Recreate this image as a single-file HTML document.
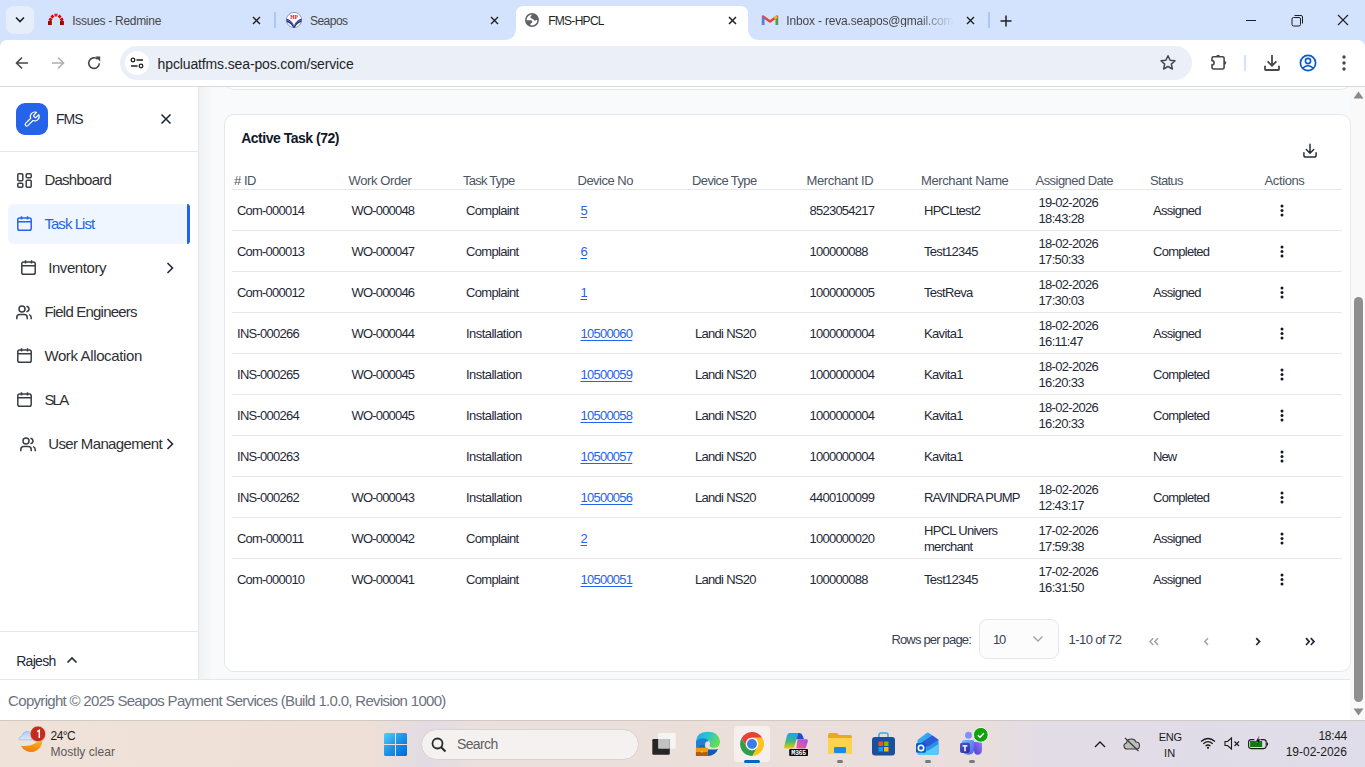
<!DOCTYPE html>
<html><head><meta charset="utf-8"><title>FMS-HPCL</title>
<style>
*{box-sizing:border-box;margin:0;padding:0}
html,body{width:1365px;height:767px;overflow:hidden;font-family:"Liberation Sans",sans-serif;background:#fff;position:relative}
.a{position:absolute}
.t{position:absolute;white-space:nowrap;line-height:1}
svg{overflow:visible}
</style></head><body>
<div class="a" style="left:0px;top:0px;width:1365px;height:50px;background:#d3e3fd"></div>
<div class="a" style="left:6px;top:6px;width:28px;height:28px;background:#e6eefb;border-radius:8px"></div>
<svg class="a" style="left:14px;top:16px;" width="12" height="8" viewBox="0 0 12 8"><path d="M2 1.5 L6 5.5 L10 1.5" fill="none" stroke="#1f1f1f" stroke-width="1.6"/></svg>
<svg class="a" style="left:40px;top:8px;" width="30" height="24" viewBox="0 0 30 24"><rect x="8" y="13" width="3.8" height="4" fill="#a80000"/><rect x="20" y="13" width="3.9" height="4" fill="#a80000"/><rect x="9" y="10" width="3" height="3" fill="#d60000" transform="rotate(30 10.5 11.5)"/><rect x="20.2" y="10" width="3" height="3" fill="#d60000" transform="rotate(-30 21.7 11.5)"/><rect x="11" y="7" width="2.8" height="2.8" fill="#e00000" transform="rotate(45 12.4 8.4)"/><rect x="18.2" y="7" width="2.8" height="2.8" fill="#e00000" transform="rotate(45 19.6 8.4)"/><path d="M14 5.8H17.8L17 8.6H14.8Z" fill="#e8192c"/></svg>
<div class="t" style="left:72.30px;top:14.60px;font-size:12px;color:#474747;letter-spacing:-0.291px;">Issues - Redmine</div>
<svg class="a" style="left:252px;top:16px;" width="9" height="9" viewBox="0 0 9 9"><path d="M1 1L8 8M8 1L1 8" stroke="#1f1f1f" stroke-width="1.4"/></svg>
<div class="a" style="left:274px;top:12px;width:1.5px;height:16px;background:#a8c7fa"></div>
<svg class="a" style="left:286px;top:12px;" width="16" height="16" viewBox="0 0 16 16"><defs><clipPath id="hpc"><circle cx="8" cy="8" r="7.7"/></clipPath></defs><circle cx="8" cy="8" r="7.6" fill="#fff" stroke="#5060a8" stroke-width="0.6"/><g clip-path="url(#hpc)"><path d="M-0.5 6.6Q5 6.8 8 13.2Q11 6.8 16.5 6.6V10Q11.5 10.3 8.6 16H7.4Q4.5 10.3 -0.5 10Z" fill="#1c2a80"/><path d="M0 8.3Q5.2 8.6 8 14.2Q10.8 8.6 16 8.3" fill="none" stroke="#fff" stroke-width="0.5" opacity="0.7"/></g><text x="8" y="6.8" font-size="5.6" font-weight="700" text-anchor="middle" fill="#d8141e" font-family="Liberation Serif" letter-spacing="-0.2">HP</text></svg>
<div class="t" style="left:310.00px;top:14.60px;font-size:12px;color:#474747;letter-spacing:-0.533px;">Seapos</div>
<svg class="a" style="left:490px;top:16px;" width="9" height="9" viewBox="0 0 9 9"><path d="M1 1L8 8M8 1L1 8" stroke="#1f1f1f" stroke-width="1.4"/></svg>
<svg class="a" style="left:504px;top:6px;" width="256" height="34" viewBox="0 0 256 34"><path d="M0 34 Q12 34 12 22 L12 8 Q12 0 20 0 L236 0 Q244 0 244 8 L244 22 Q244 34 256 34 Z" fill="#fff"/></svg>
<svg class="a" style="left:524px;top:12px;" width="16" height="16" viewBox="0 0 16 16"><defs><clipPath id="glc"><circle cx="8" cy="8" r="6.3"/></clipPath></defs><circle cx="8" cy="8" r="6.2" fill="none" stroke="#5f6368" stroke-width="1.5"/><g clip-path="url(#glc)" fill="#5f6368"><path d="M6.5 4.6Q7.5 2.6 9.8 1.8L15 4V8.3L12.2 8Q11.2 9.2 10 8.2Q9.2 6.6 7.4 6.6Q6.2 6.2 6.5 4.6Z"/><path d="M1 8.2H6.8Q8.3 8.4 8.4 10Q8.3 11 7 11.3Q6 12 6.2 15H1Z"/></g></svg>
<div class="t" style="left:548.20px;top:14.60px;font-size:12px;color:#1f1f1f;letter-spacing:-0.717px;">FMS-HPCL</div>
<svg class="a" style="left:728px;top:16px;" width="9" height="9" viewBox="0 0 9 9"><path d="M1 1L8 8M8 1L1 8" stroke="#1f1f1f" stroke-width="1.5"/></svg>
<svg class="a" style="left:762px;top:14px;" width="16" height="12" viewBox="0 0 16 12"><path d="M1 11V2.5L8 7.5L15 2.5V11" fill="none" stroke="#ea4335" stroke-width="2.4" stroke-linejoin="round"/><path d="M1.2 11V3" stroke="#4285f4" stroke-width="2.4"/><path d="M14.8 11V3" stroke="#34a853" stroke-width="2.4"/><path d="M12.5 4.3L15 2.5" stroke="#fbbc04" stroke-width="2.4"/></svg>
<div class="t" style="left:786.3px;top:14.6px;font-size:12px;color:#474747;letter-spacing:-0.18px;width:168px;overflow:hidden;-webkit-mask-image:linear-gradient(90deg,#000 78%,transparent)">Inbox - reva.seapos@gmail.com</div>
<svg class="a" style="left:966px;top:16px;" width="9" height="9" viewBox="0 0 9 9"><path d="M1 1L8 8M8 1L1 8" stroke="#1f1f1f" stroke-width="1.4"/></svg>
<div class="a" style="left:988px;top:12px;width:1.5px;height:16px;background:#a8c7fa"></div>
<svg class="a" style="left:1000px;top:15px;" width="12" height="12" viewBox="0 0 12 12"><path d="M6 0.5V11.5M0.5 6H11.5" stroke="#1f1f1f" stroke-width="1.5"/></svg>
<div class="a" style="left:1246px;top:20px;width:10px;height:1px;background:#1f1f1f"></div>
<svg class="a" style="left:1291px;top:14px;" width="13" height="13" viewBox="0 0 13 13"><rect x="1" y="3.5" width="8.5" height="8.5" rx="1.5" fill="none" stroke="#1f1f1f" stroke-width="1"/><path d="M3.5 1.5H10Q11.5 1.5 11.5 3V9.5" fill="none" stroke="#1f1f1f" stroke-width="1"/></svg>
<svg class="a" style="left:1337px;top:14px;" width="12" height="12" viewBox="0 0 12 12"><path d="M1 1L11 11M11 1L1 11" stroke="#1f1f1f" stroke-width="1.1"/></svg>
<div class="a" style="left:0;top:40px;width:1365px;height:47px;background:#fff;border-radius:7px 7px 0 0"></div>
<div class="a" style="left:0px;top:86px;width:1365px;height:1px;background:#d9d9d9"></div>
<svg class="a" style="left:15px;top:56px;" width="14" height="14" viewBox="0 0 14 14"><path d="M13 7H2M7 1.5L1.5 7L7 12.5" fill="none" stroke="#474747" stroke-width="1.6"/></svg>
<svg class="a" style="left:51px;top:56px;" width="14" height="14" viewBox="0 0 14 14"><path d="M1 7H12M7 1.5L12.5 7L7 12.5" fill="none" stroke="#b0b0b0" stroke-width="1.6"/></svg>
<svg class="a" style="left:87px;top:56px;" width="14" height="14" viewBox="0 0 14 14"><path d="M12.3 7.2A5.3 5.3 0 1 1 10.6 3.2" fill="none" stroke="#474747" stroke-width="1.6"/><path d="M8.3 0.6H13.2V5.5Z" fill="#474747"/></svg>
<div class="a" style="left:120px;top:46px;width:1072px;height:34px;background:#eaeff8;border-radius:17px"></div>
<div class="a" style="left:125px;top:51px;width:24px;height:24px;background:#fff;border-radius:12px"></div>
<svg class="a" style="left:130px;top:57px;" width="14" height="12" viewBox="0 0 14 12"><circle cx="3" cy="3" r="1.8" fill="none" stroke="#1f1f1f" stroke-width="1.3"/><path d="M6.5 3H13M1 9H7.5" stroke="#1f1f1f" stroke-width="1.3"/><circle cx="11" cy="9" r="1.8" fill="none" stroke="#1f1f1f" stroke-width="1.3"/></svg>
<div class="t" style="left:157.60px;top:56.50px;font-size:14px;color:#1f1f1f;letter-spacing:-0.132px;">hpcluatfms.sea-pos.com/service</div>
<svg class="a" style="left:1159px;top:54px;" width="18" height="18" viewBox="0 0 18 18"><path d="M9 1.8L11.1 6.3L16 6.8L12.3 10.1L13.4 15L9 12.5L4.6 15L5.7 10.1L2 6.8L6.9 6.3Z" fill="none" stroke="#474747" stroke-width="1.5" stroke-linejoin="round"/></svg>
<svg class="a" style="left:1210px;top:54px;" width="18" height="17" viewBox="0 0 18 17"><path d="M3.5 2.7H12.6Q14.1 2.7 14.1 4.2V13.5Q14.1 15 12.6 15H3.5Q2 15 2 13.5V10.8A2 2 0 0 0 2 6.6V4.2Q2 2.7 3.5 2.7Z" fill="none" stroke="#474747" stroke-width="1.6" stroke-linejoin="round"/><path d="M6.2 2.6A1.9 1.9 0 0 1 10 2.6Z" fill="#474747"/><path d="M14.3 6.9A1.9 1.9 0 0 1 14.3 10.7Z" fill="#474747"/></svg>
<div class="a" style="left:1244px;top:55px;width:2px;height:16px;background:#d3e3fd"></div>
<svg class="a" style="left:1263px;top:54px;" width="18" height="18" viewBox="0 0 18 18"><path d="M9 1V11.8M4.6 7.3L9 11.7L13.4 7.3" fill="none" stroke="#474747" stroke-width="1.8"/><path d="M2 11.8V15.2Q2 16 2.8 16H15.2Q16 16 16 15.2V11.8" fill="none" stroke="#474747" stroke-width="1.8"/></svg>
<svg class="a" style="left:1299px;top:54px;" width="18" height="18" viewBox="0 0 18 18"><circle cx="9" cy="9" r="7.6" fill="none" stroke="#0b57d0" stroke-width="1.7"/><circle cx="9" cy="7" r="2.6" fill="none" stroke="#0b57d0" stroke-width="1.6"/><path d="M4 14Q9 9.5 14 14" fill="none" stroke="#0b57d0" stroke-width="1.6"/></svg>
<svg class="a" style="left:1340px;top:55px;" width="8" height="16" viewBox="0 0 8 16"><circle cx="4" cy="2" r="1.7" fill="#474747"/><circle cx="4" cy="8" r="1.7" fill="#474747"/><circle cx="4" cy="14" r="1.7" fill="#474747"/></svg>
<div class="a" style="left:0px;top:87px;width:1350px;height:593px;background:#f9fafb"></div>
<div class="a" style="left:1350px;top:87px;width:15px;height:633px;background:#f9f9f9"></div>
<svg class="a" style="left:1353px;top:91px;" width="11" height="8" viewBox="0 0 11 8"><path d="M0.5 7.5L5.5 0.5L10.5 7.5Z" fill="#8a8a8a"/></svg>
<svg class="a" style="left:1353px;top:708px;" width="11" height="8" viewBox="0 0 11 8"><path d="M0.5 0.5L5.5 7.5L10.5 0.5Z" fill="#8a8a8a"/></svg>
<div class="a" style="left:1354px;top:297px;width:9px;height:405px;background:#8f8f8f;border-radius:5px"></div>
<div class="a" style="left:0;top:87px;width:1350px;height:20px;overflow:hidden"><div class="a" style="left:224px;top:-27px;width:1127px;height:30px;background:#fff;border:1px solid #e5e7eb;border-top:none;border-radius:0 0 10px 10px"></div></div>
<div class="a" style="left:0px;top:86px;width:1350px;height:1px;background:#d9d9d9"></div>
<div class="a" style="left:0;top:87px;width:199px;height:593px;background:#fff;border-right:1px solid #e5e7eb"></div>
<div class="a" style="left:199px;top:87px;width:14px;height:593px;background:linear-gradient(90deg,rgba(0,0,0,0.035),rgba(0,0,0,0))"></div>
<div class="a" style="left:0px;top:151px;width:198px;height:1px;background:#e5e7eb"></div>
<div class="a" style="left:0px;top:631px;width:198px;height:1px;background:#e5e7eb"></div>
<div class="a" style="left:16px;top:103px;width:32px;height:32px;background:#2563eb;border-radius:9px"></div>
<svg class="a" style="left:24px;top:111px;" width="16" height="16" viewBox="0 0 16 16"><path d="M10.2 4.2a0.8 0.8 0 0 0 0 1.1l1.3 1.3a0.8 0.8 0 0 0 1.1 0l3-3a4.8 4.8 0 0 1-6.3 6.3l-5.5 5.5a1.7 1.7 0 0 1-2.4-2.4l5.5-5.5a4.8 4.8 0 0 1 6.3-6.3z" fill="none" stroke="#fff" stroke-width="1.3" stroke-linejoin="round" transform="translate(0.3,0.3) scale(0.93)"/></svg>
<div class="t" style="left:56.00px;top:112.40px;font-size:14px;color:#1f2937;letter-spacing:-1.017px;">FMS</div>
<svg class="a" style="left:160px;top:113px;" width="12" height="12" viewBox="0 0 12 12"><path d="M1.5 1.5L10.5 10.5M10.5 1.5L1.5 10.5" stroke="#1f2937" stroke-width="1.6"/></svg>
<svg class="a" style="left:17px;top:173px;" width="15" height="15" viewBox="0 0 15 15"><rect x="0.8" y="0.8" width="5" height="7" rx="1" fill="none" stroke="#3a3d44" stroke-width="1.5"/><rect x="9.2" y="0.8" width="5" height="4" rx="1" fill="none" stroke="#3a3d44" stroke-width="1.5"/><rect x="9.2" y="7.2" width="5" height="7" rx="1" fill="none" stroke="#3a3d44" stroke-width="1.5"/><rect x="0.8" y="10.2" width="5" height="4" rx="1" fill="none" stroke="#3a3d44" stroke-width="1.5"/></svg>
<div class="t" style="left:44.40px;top:171.75px;font-size:15px;color:#2e3034;letter-spacing:-0.731px;">Dashboard</div>
<div class="a" style="left:8px;top:204px;width:182px;height:40px;background:#eff6ff;border-radius:6px"></div>
<div class="a" style="left:187px;top:204px;width:3px;height:40px;background:#2563eb;border-radius:0 6px 6px 0"></div>
<svg class="a" style="left:17px;top:216px;" width="15" height="15" viewBox="0 0 15 15"><rect x="0.8" y="2" width="13.4" height="12.2" rx="1.8" fill="none" stroke="#2563eb" stroke-width="1.5"/><path d="M0.8 5.8H14.2M4.5 0.3V3.5M10.5 0.3V3.5" stroke="#2563eb" stroke-width="1.5"/></svg>
<div class="t" style="left:44.40px;top:216.05px;font-size:15px;color:#2563eb;letter-spacing:-0.939px;">Task List</div>
<svg class="a" style="left:21px;top:260px;" width="15" height="15" viewBox="0 0 15 15"><rect x="0.8" y="2" width="13.4" height="12.2" rx="1.8" fill="none" stroke="#3a3d44" stroke-width="1.5"/><path d="M0.8 5.8H14.2M4.5 0.3V3.5M10.5 0.3V3.5" stroke="#3a3d44" stroke-width="1.5"/></svg>
<div class="t" style="left:48.20px;top:259.95px;font-size:15px;color:#2e3034;letter-spacing:-0.422px;">Inventory</div>
<svg class="a" style="left:166px;top:262px;" width="8" height="12" viewBox="0 0 8 12"><path d="M1.5 1L6.5 6L1.5 11" fill="none" stroke="#1f2937" stroke-width="1.6"/></svg>
<svg class="a" style="left:16px;top:305px;" width="16" height="15" viewBox="0 0 16 15"><circle cx="6" cy="4" r="3" fill="none" stroke="#3a3d44" stroke-width="1.5"/><path d="M0.8 14.2V12.5Q0.8 9.5 3.8 9.5H8.2Q11.2 9.5 11.2 12.5V14.2" fill="none" stroke="#3a3d44" stroke-width="1.5"/><path d="M10.5 1.2Q13 2 13 4Q13 6 10.5 6.8M13 9.6Q15.2 10.3 15.2 12.5V14.2" fill="none" stroke="#3a3d44" stroke-width="1.5"/></svg>
<div class="t" style="left:44.40px;top:303.95px;font-size:15px;color:#2e3034;letter-spacing:-0.794px;">Field Engineers</div>
<svg class="a" style="left:17px;top:348px;" width="15" height="15" viewBox="0 0 15 15"><rect x="0.8" y="2" width="13.4" height="12.2" rx="1.8" fill="none" stroke="#3a3d44" stroke-width="1.5"/><path d="M0.8 5.8H14.2M4.5 0.3V3.5M10.5 0.3V3.5" stroke="#3a3d44" stroke-width="1.5"/></svg>
<div class="t" style="left:44.40px;top:347.95px;font-size:15px;color:#2e3034;letter-spacing:-0.373px;">Work Allocation</div>
<svg class="a" style="left:17px;top:392px;" width="15" height="15" viewBox="0 0 15 15"><rect x="0.8" y="2" width="13.4" height="12.2" rx="1.8" fill="none" stroke="#3a3d44" stroke-width="1.5"/><path d="M0.8 5.8H14.2M4.5 0.3V3.5M10.5 0.3V3.5" stroke="#3a3d44" stroke-width="1.5"/></svg>
<div class="t" style="left:44.40px;top:391.95px;font-size:15px;color:#2e3034;letter-spacing:-1.784px;">SLA</div>
<svg class="a" style="left:20px;top:437px;" width="16" height="15" viewBox="0 0 16 15"><circle cx="6" cy="4" r="3" fill="none" stroke="#3a3d44" stroke-width="1.5"/><path d="M0.8 14.2V12.5Q0.8 9.5 3.8 9.5H8.2Q11.2 9.5 11.2 12.5V14.2" fill="none" stroke="#3a3d44" stroke-width="1.5"/><path d="M10.5 1.2Q13 2 13 4Q13 6 10.5 6.8M13 9.6Q15.2 10.3 15.2 12.5V14.2" fill="none" stroke="#3a3d44" stroke-width="1.5"/></svg>
<div class="t" style="left:48.20px;top:435.95px;font-size:15px;color:#2e3034;letter-spacing:-0.639px;">User Management</div>
<svg class="a" style="left:166px;top:438px;" width="8" height="12" viewBox="0 0 8 12"><path d="M1.5 1L6.5 6L1.5 11" fill="none" stroke="#1f2937" stroke-width="1.6"/></svg>
<div class="t" style="left:16.20px;top:653.60px;font-size:14px;color:#1f2937;letter-spacing:-0.696px;">Rajesh</div>
<svg class="a" style="left:66px;top:655px;" width="12" height="9" viewBox="0 0 12 9"><path d="M1.5 7.5L6 3L10.5 7.5" fill="none" stroke="#1f2937" stroke-width="1.6"/></svg>
<div class="a" style="left:224px;top:114px;width:1127px;height:558px;background:#fff;border:1px solid #e5e7eb;border-radius:10px"></div>
<div class="t" style="left:241.20px;top:131.10px;font-size:14px;color:#111827;font-weight:700;letter-spacing:-0.491px;">Active Task (72)</div>
<svg class="a" style="left:1302px;top:143px;" width="16" height="16" viewBox="0 0 16 16"><path d="M8 1.3V10.2M4.3 6.5L8 10.2L11.7 6.5M1.9 9.8V12.2Q1.9 14.1 3.8 14.1H12.2Q14.1 14.1 14.1 12.2V9.8" fill="none" stroke="#2b303a" stroke-width="1.5" stroke-linecap="round" stroke-linejoin="round"/></svg>
<div class="t" style="left:234.00px;top:173.95px;font-size:13px;color:#4b5563;letter-spacing:-0.477px;font-weight:400;"># ID</div>
<div class="t" style="left:348.50px;top:173.95px;font-size:13px;color:#4b5563;letter-spacing:-0.393px;font-weight:400;">Work Order</div>
<div class="t" style="left:463.00px;top:173.95px;font-size:13px;color:#4b5563;letter-spacing:-0.754px;font-weight:400;">Task Type</div>
<div class="t" style="left:577.50px;top:173.95px;font-size:13px;color:#4b5563;letter-spacing:-0.507px;font-weight:400;">Device No</div>
<div class="t" style="left:692.00px;top:173.95px;font-size:13px;color:#4b5563;letter-spacing:-0.608px;font-weight:400;">Device Type</div>
<div class="t" style="left:806.50px;top:173.95px;font-size:13px;color:#4b5563;letter-spacing:-0.372px;font-weight:400;">Merchant ID</div>
<div class="t" style="left:921.00px;top:173.95px;font-size:13px;color:#4b5563;letter-spacing:-0.390px;font-weight:400;">Merchant Name</div>
<div class="t" style="left:1035.50px;top:173.95px;font-size:13px;color:#4b5563;letter-spacing:-0.542px;font-weight:400;">Assigned Date</div>
<div class="t" style="left:1150.00px;top:173.95px;font-size:13px;color:#4b5563;letter-spacing:-0.692px;font-weight:400;">Status</div>
<div class="t" style="left:1264.50px;top:173.95px;font-size:13px;color:#4b5563;letter-spacing:-0.376px;font-weight:400;">Actions</div>
<div class="a" style="left:232px;top:189px;width:1110px;height:1px;background:#e5e7eb"></div>
<div class="t" style="left:237.00px;top:203.95px;font-size:13px;color:#1f2937;letter-spacing:-0.789px;">Com-000014</div>
<div class="t" style="left:351.50px;top:203.95px;font-size:13px;color:#1f2937;letter-spacing:-0.818px;">WO-000048</div>
<div class="t" style="left:466.00px;top:203.95px;font-size:13px;color:#1f2937;letter-spacing:-0.683px;">Complaint</div>
<div class="t" style="left:580.50px;top:203.95px;font-size:13px;color:#2563eb;letter-spacing:-0.759px;text-decoration:underline;text-underline-offset:2px;">5</div>
<div class="t" style="left:809.50px;top:203.95px;font-size:13px;color:#1f2937;letter-spacing:-0.759px;">8523054217</div>
<div class="t" style="left:924.00px;top:203.95px;font-size:13px;color:#1f2937;letter-spacing:-0.733px;">HPCLtest2</div>
<div class="t" style="left:1038.50px;top:196.15px;font-size:13px;color:#1f2937;letter-spacing:-0.698px;">19-02-2026</div>
<div class="t" style="left:1038.50px;top:211.95px;font-size:13px;color:#1f2937;letter-spacing:-0.664px;">18:43:28</div>
<div class="t" style="left:1153.00px;top:203.95px;font-size:13px;color:#1f2937;letter-spacing:-0.702px;">Assigned</div>
<svg class="a" style="left:1279px;top:203.5px;" width="6" height="14" viewBox="0 0 6 14"><circle cx="3" cy="1.9" r="1.5" fill="#111827"/><circle cx="3" cy="6.5" r="1.5" fill="#111827"/><circle cx="3" cy="11.1" r="1.5" fill="#111827"/></svg>
<div class="a" style="left:232px;top:230px;width:1110px;height:1px;background:#e5e7eb"></div>
<div class="t" style="left:237.00px;top:244.95px;font-size:13px;color:#1f2937;letter-spacing:-0.789px;">Com-000013</div>
<div class="t" style="left:351.50px;top:244.95px;font-size:13px;color:#1f2937;letter-spacing:-0.818px;">WO-000047</div>
<div class="t" style="left:466.00px;top:244.95px;font-size:13px;color:#1f2937;letter-spacing:-0.683px;">Complaint</div>
<div class="t" style="left:580.50px;top:244.95px;font-size:13px;color:#2563eb;letter-spacing:-0.759px;text-decoration:underline;text-underline-offset:2px;">6</div>
<div class="t" style="left:809.50px;top:244.95px;font-size:13px;color:#1f2937;letter-spacing:-0.759px;">100000088</div>
<div class="t" style="left:924.00px;top:244.95px;font-size:13px;color:#1f2937;letter-spacing:-0.700px;">Test12345</div>
<div class="t" style="left:1038.50px;top:237.15px;font-size:13px;color:#1f2937;letter-spacing:-0.698px;">18-02-2026</div>
<div class="t" style="left:1038.50px;top:252.95px;font-size:13px;color:#1f2937;letter-spacing:-0.664px;">17:50:33</div>
<div class="t" style="left:1153.00px;top:244.95px;font-size:13px;color:#1f2937;letter-spacing:-0.733px;">Completed</div>
<svg class="a" style="left:1279px;top:244.5px;" width="6" height="14" viewBox="0 0 6 14"><circle cx="3" cy="1.9" r="1.5" fill="#111827"/><circle cx="3" cy="6.5" r="1.5" fill="#111827"/><circle cx="3" cy="11.1" r="1.5" fill="#111827"/></svg>
<div class="a" style="left:232px;top:271px;width:1110px;height:1px;background:#e5e7eb"></div>
<div class="t" style="left:237.00px;top:285.95px;font-size:13px;color:#1f2937;letter-spacing:-0.789px;">Com-000012</div>
<div class="t" style="left:351.50px;top:285.95px;font-size:13px;color:#1f2937;letter-spacing:-0.818px;">WO-000046</div>
<div class="t" style="left:466.00px;top:285.95px;font-size:13px;color:#1f2937;letter-spacing:-0.683px;">Complaint</div>
<div class="t" style="left:580.50px;top:285.95px;font-size:13px;color:#2563eb;letter-spacing:-0.759px;text-decoration:underline;text-underline-offset:2px;">1</div>
<div class="t" style="left:809.50px;top:285.95px;font-size:13px;color:#1f2937;letter-spacing:-0.759px;">1000000005</div>
<div class="t" style="left:924.00px;top:285.95px;font-size:13px;color:#1f2937;letter-spacing:-0.711px;">TestReva</div>
<div class="t" style="left:1038.50px;top:278.15px;font-size:13px;color:#1f2937;letter-spacing:-0.698px;">18-02-2026</div>
<div class="t" style="left:1038.50px;top:293.95px;font-size:13px;color:#1f2937;letter-spacing:-0.664px;">17:30:03</div>
<div class="t" style="left:1153.00px;top:285.95px;font-size:13px;color:#1f2937;letter-spacing:-0.702px;">Assigned</div>
<svg class="a" style="left:1279px;top:285.5px;" width="6" height="14" viewBox="0 0 6 14"><circle cx="3" cy="1.9" r="1.5" fill="#111827"/><circle cx="3" cy="6.5" r="1.5" fill="#111827"/><circle cx="3" cy="11.1" r="1.5" fill="#111827"/></svg>
<div class="a" style="left:232px;top:312px;width:1110px;height:1px;background:#e5e7eb"></div>
<div class="t" style="left:237.00px;top:326.95px;font-size:13px;color:#1f2937;letter-spacing:-0.728px;">INS-000266</div>
<div class="t" style="left:351.50px;top:326.95px;font-size:13px;color:#1f2937;letter-spacing:-0.818px;">WO-000044</div>
<div class="t" style="left:466.00px;top:326.95px;font-size:13px;color:#1f2937;letter-spacing:-0.544px;">Installation</div>
<div class="t" style="left:580.50px;top:326.95px;font-size:13px;color:#2563eb;letter-spacing:-0.759px;text-decoration:underline;text-underline-offset:2px;">10500060</div>
<div class="t" style="left:695.00px;top:326.95px;font-size:13px;color:#1f2937;letter-spacing:-0.713px;">Landi NS20</div>
<div class="t" style="left:809.50px;top:326.95px;font-size:13px;color:#1f2937;letter-spacing:-0.759px;">1000000004</div>
<div class="t" style="left:924.00px;top:326.95px;font-size:13px;color:#1f2937;letter-spacing:-0.650px;">Kavita1</div>
<div class="t" style="left:1038.50px;top:319.15px;font-size:13px;color:#1f2937;letter-spacing:-0.698px;">18-02-2026</div>
<div class="t" style="left:1038.50px;top:334.95px;font-size:13px;color:#1f2937;letter-spacing:-0.651px;">16:11:47</div>
<div class="t" style="left:1153.00px;top:326.95px;font-size:13px;color:#1f2937;letter-spacing:-0.702px;">Assigned</div>
<svg class="a" style="left:1279px;top:326.5px;" width="6" height="14" viewBox="0 0 6 14"><circle cx="3" cy="1.9" r="1.5" fill="#111827"/><circle cx="3" cy="6.5" r="1.5" fill="#111827"/><circle cx="3" cy="11.1" r="1.5" fill="#111827"/></svg>
<div class="a" style="left:232px;top:353px;width:1110px;height:1px;background:#e5e7eb"></div>
<div class="t" style="left:237.00px;top:367.95px;font-size:13px;color:#1f2937;letter-spacing:-0.728px;">INS-000265</div>
<div class="t" style="left:351.50px;top:367.95px;font-size:13px;color:#1f2937;letter-spacing:-0.818px;">WO-000045</div>
<div class="t" style="left:466.00px;top:367.95px;font-size:13px;color:#1f2937;letter-spacing:-0.544px;">Installation</div>
<div class="t" style="left:580.50px;top:367.95px;font-size:13px;color:#2563eb;letter-spacing:-0.759px;text-decoration:underline;text-underline-offset:2px;">10500059</div>
<div class="t" style="left:695.00px;top:367.95px;font-size:13px;color:#1f2937;letter-spacing:-0.713px;">Landi NS20</div>
<div class="t" style="left:809.50px;top:367.95px;font-size:13px;color:#1f2937;letter-spacing:-0.759px;">1000000004</div>
<div class="t" style="left:924.00px;top:367.95px;font-size:13px;color:#1f2937;letter-spacing:-0.650px;">Kavita1</div>
<div class="t" style="left:1038.50px;top:360.15px;font-size:13px;color:#1f2937;letter-spacing:-0.698px;">18-02-2026</div>
<div class="t" style="left:1038.50px;top:375.95px;font-size:13px;color:#1f2937;letter-spacing:-0.664px;">16:20:33</div>
<div class="t" style="left:1153.00px;top:367.95px;font-size:13px;color:#1f2937;letter-spacing:-0.733px;">Completed</div>
<svg class="a" style="left:1279px;top:367.5px;" width="6" height="14" viewBox="0 0 6 14"><circle cx="3" cy="1.9" r="1.5" fill="#111827"/><circle cx="3" cy="6.5" r="1.5" fill="#111827"/><circle cx="3" cy="11.1" r="1.5" fill="#111827"/></svg>
<div class="a" style="left:232px;top:394px;width:1110px;height:1px;background:#e5e7eb"></div>
<div class="t" style="left:237.00px;top:408.95px;font-size:13px;color:#1f2937;letter-spacing:-0.728px;">INS-000264</div>
<div class="t" style="left:351.50px;top:408.95px;font-size:13px;color:#1f2937;letter-spacing:-0.818px;">WO-000045</div>
<div class="t" style="left:466.00px;top:408.95px;font-size:13px;color:#1f2937;letter-spacing:-0.544px;">Installation</div>
<div class="t" style="left:580.50px;top:408.95px;font-size:13px;color:#2563eb;letter-spacing:-0.759px;text-decoration:underline;text-underline-offset:2px;">10500058</div>
<div class="t" style="left:695.00px;top:408.95px;font-size:13px;color:#1f2937;letter-spacing:-0.713px;">Landi NS20</div>
<div class="t" style="left:809.50px;top:408.95px;font-size:13px;color:#1f2937;letter-spacing:-0.759px;">1000000004</div>
<div class="t" style="left:924.00px;top:408.95px;font-size:13px;color:#1f2937;letter-spacing:-0.650px;">Kavita1</div>
<div class="t" style="left:1038.50px;top:401.15px;font-size:13px;color:#1f2937;letter-spacing:-0.698px;">18-02-2026</div>
<div class="t" style="left:1038.50px;top:416.95px;font-size:13px;color:#1f2937;letter-spacing:-0.664px;">16:20:33</div>
<div class="t" style="left:1153.00px;top:408.95px;font-size:13px;color:#1f2937;letter-spacing:-0.733px;">Completed</div>
<svg class="a" style="left:1279px;top:408.5px;" width="6" height="14" viewBox="0 0 6 14"><circle cx="3" cy="1.9" r="1.5" fill="#111827"/><circle cx="3" cy="6.5" r="1.5" fill="#111827"/><circle cx="3" cy="11.1" r="1.5" fill="#111827"/></svg>
<div class="a" style="left:232px;top:435px;width:1110px;height:1px;background:#e5e7eb"></div>
<div class="t" style="left:237.00px;top:449.95px;font-size:13px;color:#1f2937;letter-spacing:-0.728px;">INS-000263</div>
<div class="t" style="left:466.00px;top:449.95px;font-size:13px;color:#1f2937;letter-spacing:-0.544px;">Installation</div>
<div class="t" style="left:580.50px;top:449.95px;font-size:13px;color:#2563eb;letter-spacing:-0.759px;text-decoration:underline;text-underline-offset:2px;">10500057</div>
<div class="t" style="left:695.00px;top:449.95px;font-size:13px;color:#1f2937;letter-spacing:-0.713px;">Landi NS20</div>
<div class="t" style="left:809.50px;top:449.95px;font-size:13px;color:#1f2937;letter-spacing:-0.759px;">1000000004</div>
<div class="t" style="left:924.00px;top:449.95px;font-size:13px;color:#1f2937;letter-spacing:-0.650px;">Kavita1</div>
<div class="t" style="left:1153.00px;top:449.95px;font-size:13px;color:#1f2937;letter-spacing:-0.910px;">New</div>
<svg class="a" style="left:1279px;top:449.5px;" width="6" height="14" viewBox="0 0 6 14"><circle cx="3" cy="1.9" r="1.5" fill="#111827"/><circle cx="3" cy="6.5" r="1.5" fill="#111827"/><circle cx="3" cy="11.1" r="1.5" fill="#111827"/></svg>
<div class="a" style="left:232px;top:476px;width:1110px;height:1px;background:#e5e7eb"></div>
<div class="t" style="left:237.00px;top:490.95px;font-size:13px;color:#1f2937;letter-spacing:-0.728px;">INS-000262</div>
<div class="t" style="left:351.50px;top:490.95px;font-size:13px;color:#1f2937;letter-spacing:-0.818px;">WO-000043</div>
<div class="t" style="left:466.00px;top:490.95px;font-size:13px;color:#1f2937;letter-spacing:-0.544px;">Installation</div>
<div class="t" style="left:580.50px;top:490.95px;font-size:13px;color:#2563eb;letter-spacing:-0.759px;text-decoration:underline;text-underline-offset:2px;">10500056</div>
<div class="t" style="left:695.00px;top:490.95px;font-size:13px;color:#1f2937;letter-spacing:-0.713px;">Landi NS20</div>
<div class="t" style="left:809.50px;top:490.95px;font-size:13px;color:#1f2937;letter-spacing:-0.759px;">4400100099</div>
<div class="t" style="left:924.00px;top:490.95px;font-size:13px;color:#1f2937;letter-spacing:-0.862px;">RAVINDRA PUMP</div>
<div class="t" style="left:1038.50px;top:483.15px;font-size:13px;color:#1f2937;letter-spacing:-0.698px;">18-02-2026</div>
<div class="t" style="left:1038.50px;top:498.95px;font-size:13px;color:#1f2937;letter-spacing:-0.664px;">12:43:17</div>
<div class="t" style="left:1153.00px;top:490.95px;font-size:13px;color:#1f2937;letter-spacing:-0.733px;">Completed</div>
<svg class="a" style="left:1279px;top:490.5px;" width="6" height="14" viewBox="0 0 6 14"><circle cx="3" cy="1.9" r="1.5" fill="#111827"/><circle cx="3" cy="6.5" r="1.5" fill="#111827"/><circle cx="3" cy="11.1" r="1.5" fill="#111827"/></svg>
<div class="a" style="left:232px;top:517px;width:1110px;height:1px;background:#e5e7eb"></div>
<div class="t" style="left:237.00px;top:531.95px;font-size:13px;color:#1f2937;letter-spacing:-0.779px;">Com-000011</div>
<div class="t" style="left:351.50px;top:531.95px;font-size:13px;color:#1f2937;letter-spacing:-0.818px;">WO-000042</div>
<div class="t" style="left:466.00px;top:531.95px;font-size:13px;color:#1f2937;letter-spacing:-0.683px;">Complaint</div>
<div class="t" style="left:580.50px;top:531.95px;font-size:13px;color:#2563eb;letter-spacing:-0.759px;text-decoration:underline;text-underline-offset:2px;">2</div>
<div class="t" style="left:809.50px;top:531.95px;font-size:13px;color:#1f2937;letter-spacing:-0.759px;">1000000020</div>
<div class="t" style="left:924.00px;top:524.15px;font-size:13px;color:#1f2937;letter-spacing:-0.716px;">HPCL Univers</div>
<div class="t" style="left:924.00px;top:539.95px;font-size:13px;color:#1f2937;letter-spacing:-0.711px;">merchant</div>
<div class="t" style="left:1038.50px;top:524.15px;font-size:13px;color:#1f2937;letter-spacing:-0.698px;">17-02-2026</div>
<div class="t" style="left:1038.50px;top:539.95px;font-size:13px;color:#1f2937;letter-spacing:-0.664px;">17:59:38</div>
<div class="t" style="left:1153.00px;top:531.95px;font-size:13px;color:#1f2937;letter-spacing:-0.702px;">Assigned</div>
<svg class="a" style="left:1279px;top:531.5px;" width="6" height="14" viewBox="0 0 6 14"><circle cx="3" cy="1.9" r="1.5" fill="#111827"/><circle cx="3" cy="6.5" r="1.5" fill="#111827"/><circle cx="3" cy="11.1" r="1.5" fill="#111827"/></svg>
<div class="a" style="left:232px;top:558px;width:1110px;height:1px;background:#e5e7eb"></div>
<div class="t" style="left:237.00px;top:572.95px;font-size:13px;color:#1f2937;letter-spacing:-0.789px;">Com-000010</div>
<div class="t" style="left:351.50px;top:572.95px;font-size:13px;color:#1f2937;letter-spacing:-0.818px;">WO-000041</div>
<div class="t" style="left:466.00px;top:572.95px;font-size:13px;color:#1f2937;letter-spacing:-0.683px;">Complaint</div>
<div class="t" style="left:580.50px;top:572.95px;font-size:13px;color:#2563eb;letter-spacing:-0.759px;text-decoration:underline;text-underline-offset:2px;">10500051</div>
<div class="t" style="left:695.00px;top:572.95px;font-size:13px;color:#1f2937;letter-spacing:-0.713px;">Landi NS20</div>
<div class="t" style="left:809.50px;top:572.95px;font-size:13px;color:#1f2937;letter-spacing:-0.759px;">100000088</div>
<div class="t" style="left:924.00px;top:572.95px;font-size:13px;color:#1f2937;letter-spacing:-0.700px;">Test12345</div>
<div class="t" style="left:1038.50px;top:565.15px;font-size:13px;color:#1f2937;letter-spacing:-0.698px;">17-02-2026</div>
<div class="t" style="left:1038.50px;top:580.95px;font-size:13px;color:#1f2937;letter-spacing:-0.664px;">16:31:50</div>
<div class="t" style="left:1153.00px;top:572.95px;font-size:13px;color:#1f2937;letter-spacing:-0.702px;">Assigned</div>
<svg class="a" style="left:1279px;top:572.5px;" width="6" height="14" viewBox="0 0 6 14"><circle cx="3" cy="1.9" r="1.5" fill="#111827"/><circle cx="3" cy="6.5" r="1.5" fill="#111827"/><circle cx="3" cy="11.1" r="1.5" fill="#111827"/></svg>
<div class="t" style="left:891.40px;top:633.15px;font-size:13px;color:#374151;letter-spacing:-0.817px;">Rows per page:</div>
<div class="a" style="left:979px;top:619px;width:80px;height:40px;background:#fcfcfd;border:1px solid #e5e7eb;border-radius:8px"></div>
<div class="t" style="left:993.00px;top:633.15px;font-size:13px;color:#374151;letter-spacing:-1.229px;">10</div>
<svg class="a" style="left:1032px;top:635px;" width="12" height="8" viewBox="0 0 12 8"><path d="M1.5 1.5L6 6L10.5 1.5" fill="none" stroke="#9ca3af" stroke-width="1.3"/></svg>
<div class="t" style="left:1068.60px;top:633.15px;font-size:13px;color:#374151;letter-spacing:-0.574px;">1-10 of 72</div>
<svg class="a" style="left:1148px;top:637px;" width="12" height="9" viewBox="0 0 12 9"><path d="M5.2 1.2L2 4.6L5.2 8M10 1.2L6.8 4.6L10 8" fill="none" stroke="#9ca3af" stroke-width="1.5"/></svg>
<svg class="a" style="left:1202px;top:637px;" width="8" height="9" viewBox="0 0 8 9"><path d="M6 1.2L2.8 4.6L6 8" fill="none" stroke="#9ca3af" stroke-width="1.5"/></svg>
<svg class="a" style="left:1254px;top:637px;" width="8" height="9" viewBox="0 0 8 9"><path d="M2.2 1.2L5.6 4.6L2.2 8" fill="none" stroke="#1f2937" stroke-width="1.7"/></svg>
<svg class="a" style="left:1304px;top:637px;" width="12" height="9" viewBox="0 0 12 9"><path d="M2 1.2L5.2 4.6L2 8M6.8 1.2L10 4.6L6.8 8" fill="none" stroke="#1f2937" stroke-width="1.7"/></svg>
<div class="a" style="left:0px;top:679px;width:1350px;height:41px;background:#fff;border-top:1px solid #e5e7eb"></div>
<div class="t" style="left:8.10px;top:693.45px;font-size:15px;color:#6b7280;letter-spacing:-0.695px;">Copyright © 2025 Seapos Payment Services (Build 1.0.0, Revision 1000)</div>
<div class="a" style="left:0px;top:720px;width:1365px;height:47px;background:linear-gradient(90deg,#efe2d9 0px,#eee0d6 370px,#e2dbe4 428px,#ebe0dc 480px,#ebdfda 700px,#e9dedc 985px,#e2dce6 1040px,#dfdde9 1365px);border-top:1px solid #d2c9c5"></div>
<svg class="a" style="left:14px;top:722px;" width="36" height="38" viewBox="0 0 36 38"><defs><linearGradient id="mn" x1="0.8" y1="0" x2="0.3" y2="1"><stop offset="0" stop-color="#f7b21c"/><stop offset="1" stop-color="#f07a0c"/></linearGradient><linearGradient id="cl" x1="0" y1="0" x2="0" y2="1"><stop offset="0" stop-color="#a9cdf7"/><stop offset="1" stop-color="#dce9fa"/></linearGradient></defs><path d="M28.3 18.3A11.3 11.3 0 0 1 6.9 23.8Q15 24.6 20 22Q24 20 25.5 18.3Z" fill="url(#mn)"/><path d="M5.8 17.8Q4.4 17.6 5 16Q5.8 14.6 7.8 14.4Q8.8 10.2 12.5 9.2Q16 9 17.5 12.5L18 17.8Z" fill="url(#cl)" stroke="#7fb0ee" stroke-width="0.6"/><circle cx="23.9" cy="11.9" r="7.8" fill="#c42b1c" stroke="#efe2da" stroke-width="0.6"/><path d="M23.2 9.6L25.3 8.3V16" fill="none" stroke="#fff" stroke-width="1.5"/></svg>
<div class="t" style="left:50.50px;top:730.00px;font-size:12px;color:#1a1a1a;letter-spacing:-0.528px;">24°C</div>
<div class="t" style="left:50.50px;top:745.50px;font-size:12px;color:#5a5a5a;letter-spacing:0.041px;">Mostly clear</div>
<svg class="a" style="left:384px;top:733px;" width="23" height="23" viewBox="0 0 23 23"><defs><linearGradient id="wg" gradientUnits="userSpaceOnUse" x1="0" y1="0" x2="23" y2="23"><stop offset="0" stop-color="#4fd0fb"/><stop offset="0.5" stop-color="#1a93e8"/><stop offset="1" stop-color="#0068d6"/></linearGradient></defs><path d="M1.5 0H11V11H0V1.5Q0 0 1.5 0Z M12 0H21.5Q23 0 23 1.5V11H12Z M0 12H11V23H1.5Q0 23 0 21.5Z M12 12H23V21.5Q23 23 21.5 23H12Z" fill="url(#wg)"/></svg>
<div class="a" style="left:421px;top:729px;width:218px;height:31px;background:#f5f1f1;border:1px solid #d9d2d2;border-radius:16px"></div>
<svg class="a" style="left:431px;top:737px;" width="16" height="16" viewBox="0 0 16 16"><circle cx="6.5" cy="6.5" r="5" fill="none" stroke="#2b2b2b" stroke-width="1.8"/><path d="M10.2 10.2L14.5 14.5" stroke="#2b2b2b" stroke-width="2"/></svg>
<div class="t" style="left:457.00px;top:737.10px;font-size:14px;color:#5d5d5d;letter-spacing:-0.626px;">Search</div>
<svg class="a" style="left:646px;top:728px;" width="36" height="32" viewBox="0 0 36 32"><rect x="12.1" y="5" width="17.7" height="15.7" rx="1.2" fill="#f4f4f4"/><rect x="6.3" y="11.1" width="17.5" height="15.6" rx="1.2" fill="#262626"/><rect x="12.1" y="11.1" width="11.7" height="9.6" rx="0.6" fill="#c2c2c2"/></svg>
<svg class="a" style="left:693px;top:729px;" width="30" height="30" viewBox="0 0 30 30"><defs><linearGradient id="eg" x1="0" y1="0" x2="1" y2="0.4"><stop offset="0" stop-color="#1ba9ef"/><stop offset="0.55" stop-color="#31c3c8"/><stop offset="1" stop-color="#62df55"/></linearGradient></defs><path d="M3 12.5Q3.5 2.8 14.5 2.7Q25.5 2.8 27 12Q27 18.8 21.5 18.8Q17 18.6 16.4 16.4Q17.2 13.2 16.2 12.2Q14.8 10.2 11.5 10.6Q6.5 11.2 4.5 16.5L3 18Z" fill="url(#eg)"/><path d="M3 12.5Q5.5 9.2 10.5 9.3Q14.5 9.6 15.8 12.2Q13 11.8 12.5 14Q11.8 16.5 12.5 19L3 19Z" fill="#1a82d8"/><circle cx="14.6" cy="15" r="2.3" fill="#eadfdb"/><path d="M14.8 20.3Q20.5 21 25 20Q22.5 26.5 14.8 27Z" fill="#0e5bb4"/><path d="M7 18.8V17.6Q7 17 7.6 17H10.4Q11 17 11 17.6V18.8" fill="none" stroke="#3a3a3a" stroke-width="0.7"/><rect x="2.9" y="18.8" width="12" height="4" fill="#f29a12"/><rect x="2.9" y="22.8" width="12" height="4.2" fill="#b06000"/><rect x="8.2" y="22" width="1.6" height="1.6" fill="#f7d21c"/></svg>
<div class="a" style="left:733px;top:725px;width:38px;height:38px;background:#f6efed;border-radius:5px;border:1px solid #e8e0dd"></div>
<svg class="a" style="left:740px;top:732px;" width="24" height="24" viewBox="0 0 24 24"><path d="M1.5 6.21A12 12 0 0 1 22.27 5.8L12 5.8A6.2 6.2 0 0 0 6.63 15.1Z" fill="#e94235"/><path d="M22.27 5.8A12 12 0 0 1 12.235 23.99L17.37 15.1A6.2 6.2 0 0 0 12 5.8Z" fill="#fcc419"/><path d="M12.235 23.99A12 12 0 0 1 1.5 6.21L6.63 15.1A6.2 6.2 0 0 0 17.37 15.1Z" fill="#2f9e4b"/><circle cx="12" cy="12" r="6.2" fill="#fff"/><circle cx="12" cy="12" r="5" fill="#3a7de6"/></svg>
<div class="a" style="left:744px;top:760px;width:16px;height:3px;background:#0067c0;border-radius:2px"></div>
<svg class="a" style="left:781px;top:729px;" width="30" height="30" viewBox="0 0 30 30"><defs><linearGradient id="mg1" x1="0" y1="0" x2="0" y2="1"><stop offset="0" stop-color="#18a2f6"/><stop offset="0.55" stop-color="#41b87a"/><stop offset="1" stop-color="#f7c800"/></linearGradient><linearGradient id="mg2" x1="1" y1="0" x2="0" y2="1"><stop offset="0" stop-color="#a04ef2"/><stop offset="1" stop-color="#fb5c80"/></linearGradient></defs><path d="M16.5 3.9H18.5Q20.8 4 21.8 7L23 10.2H15Z" fill="#1c4fd8"/><path d="M8.5 3.9H17.5L12.9 18.5Q12.5 19.6 11.3 19.6H4.5Q2.8 19.5 3.2 17.5L6 6.5Q6.6 3.9 8.5 3.9Z" fill="url(#mg1)"/><path d="M17.5 10.2H25.5Q27.3 10.3 26.8 12.5L25 18.5Q24.6 19.6 23.5 19.6H15.4L16.2 12.5Q16.6 10.2 17.5 10.2Z" fill="url(#mg2)"/><rect x="8.2" y="19.9" width="18.8" height="7.1" rx="1" fill="#0a0a0a"/><text x="17.6" y="26" font-size="6.6" font-weight="700" fill="#fff" text-anchor="middle" font-family="Liberation Mono" letter-spacing="-0.3">M365</text></svg>
<svg class="a" style="left:827px;top:732px;" width="26" height="23" viewBox="0 0 26 23"><path d="M1 3Q1 1 3 1H10L12 3H23Q25 3 25 5V21Q25 22 24 22H2Q1 22 1 21Z" fill="#e8a922"/><path d="M1 6H25V21Q25 22 24 22H2Q1 22 1 21Z" fill="#fcd34d"/><rect x="7" y="15" width="12" height="6" rx="1" fill="#1e88e5"/></svg>
<div class="a" style="left:837px;top:760px;width:6px;height:3px;background:#7a7a7a;border-radius:2px"></div>
<svg class="a" style="left:871px;top:732px;" width="25" height="24" viewBox="0 0 25 24"><path d="M8 5V3Q8 1 10 1H15Q17 1 17 3V5" fill="none" stroke="#2bb0f0" stroke-width="1.6"/><rect x="1" y="5" width="23" height="18.5" rx="3" fill="#1b4f9c"/><rect x="7.5" y="9.5" width="4.5" height="4.5" fill="#f25022"/><rect x="13" y="9.5" width="4.5" height="4.5" fill="#7fba00"/><rect x="7.5" y="15" width="4.5" height="4.5" fill="#00a4ef"/><rect x="13" y="15" width="4.5" height="4.5" fill="#ffb900"/></svg>
<svg class="a" style="left:915px;top:732px;" width="25" height="24" viewBox="0 0 25 24"><defs><linearGradient id="og" x1="0" y1="0" x2="1" y2="1"><stop offset="0" stop-color="#3fb4f6"/><stop offset="1" stop-color="#1f7fe6"/></linearGradient></defs><path d="M2.5 8L11.6 1Q12.8 0.2 14 1L23.5 8V21Q23.5 23 21.5 23H4.5Q2.5 23 2.5 21Z" fill="url(#og)"/><path d="M6.5 10.5L17.5 3.6L23.5 7.8L12.5 15Z" fill="#2c5bd6"/><path d="M2.5 13.5L12.5 19L23.5 12V21Q23.5 23 21.5 23H4.5Q2.5 23 2.5 21Z" fill="#58c8f8"/><rect x="1" y="11" width="10" height="9.8" rx="1.5" fill="#0b5bc6"/><circle cx="6" cy="15.9" r="2.7" fill="none" stroke="#fff" stroke-width="1.6"/></svg>
<div class="a" style="left:925px;top:760px;width:6px;height:3px;background:#7a7a7a;border-radius:2px"></div>
<svg class="a" style="left:955px;top:725px;" width="40" height="35" viewBox="0 0 40 35"><defs><linearGradient id="tb1" x1="0" y1="0" x2="1" y2="1"><stop offset="0" stop-color="#76c0fa"/><stop offset="1" stop-color="#5459e6"/></linearGradient><linearGradient id="tb2" x1="1" y1="0" x2="0" y2="1"><stop offset="0" stop-color="#9a7cf8"/><stop offset="1" stop-color="#4a3fd0"/></linearGradient><linearGradient id="tb3" x1="0" y1="0" x2="1" y2="1"><stop offset="0" stop-color="#4c5ad0"/><stop offset="1" stop-color="#2a2a9a"/></linearGradient></defs><circle cx="13.5" cy="10.3" r="3.5" fill="#8290f4"/><path d="M19 17H25.5Q27 17 27 18.5V25Q27 29.7 22.5 29.7Q19 29.7 19 25Z" fill="url(#tb2)"/><path d="M8.5 15H17.5Q19.2 15 19.2 16.7V24Q19.2 29.7 13.5 29.7Q8 29.7 7 25V16.5Q7 15 8.5 15Z" fill="url(#tb1)"/><rect x="5" y="17.8" width="9.8" height="10.1" rx="1.8" fill="url(#tb3)"/><path d="M7.6 20.8H12.4M10 20.8V26.2" stroke="#e6e6f5" stroke-width="1.7"/><circle cx="25.8" cy="9.8" r="7.4" fill="#13a10e" stroke="#fff" stroke-width="0.9"/><path d="M22.8 10.3L25 12.2L28.8 8.2" fill="none" stroke="#fff" stroke-width="1.5"/></svg>
<div class="a" style="left:969px;top:760px;width:6px;height:3px;background:#7a7a7a;border-radius:2px"></div>
<svg class="a" style="left:1094px;top:740px;" width="12" height="8" viewBox="0 0 12 8"><path d="M1 7L6 2L11 7" fill="none" stroke="#1a1a1a" stroke-width="1.3"/></svg>
<svg class="a" style="left:1123px;top:737px;" width="18" height="15" viewBox="0 0 18 15"><path d="M4.5 12Q1 12 1 9Q1 6.5 3.5 6Q4 2 8.5 2Q12 2 13 5Q16.5 5 16.5 8.5Q16.5 12 13.5 12Z" fill="#bdbdbd" stroke="#3a3a3a" stroke-width="1.1"/><path d="M2 1L15.5 14" stroke="#3a3a3a" stroke-width="1.2"/></svg>
<div class="t" style="left:1158.70px;top:731.95px;font-size:11px;color:#1a1a1a;letter-spacing:-0.279px;">ENG</div>
<div class="t" style="left:1164.00px;top:747.65px;font-size:11px;color:#1a1a1a;letter-spacing:0.300px;">IN</div>
<svg class="a" style="left:1200px;top:737px;" width="16" height="12" viewBox="0 0 16 12"><path d="M1 4.5Q8 -1.5 15 4.5M3.3 6.8Q8 2.5 12.7 6.8M5.6 9Q8 7 10.4 9" fill="none" stroke="#1a1a1a" stroke-width="1.3"/><circle cx="8" cy="10.8" r="1.1" fill="#1a1a1a"/></svg>
<svg class="a" style="left:1224px;top:737px;" width="17" height="13" viewBox="0 0 17 13"><path d="M1 4.5H3.5L7.5 1V12L3.5 8.5H1Z" fill="none" stroke="#1a1a1a" stroke-width="1.1"/><path d="M10.5 4.5L15 9M15 4.5L10.5 9" stroke="#1a1a1a" stroke-width="1.1"/></svg>
<svg class="a" style="left:1246px;top:734px;" width="24" height="17" viewBox="0 0 24 17"><path d="M8.4 5.6H5.1Q2.6 5.6 2.6 8.1V12.1Q2.6 14.6 5.1 14.6H17.7Q20.2 14.6 20.2 12.1V8.1Q20.2 5.6 17.7 5.6H14.6" fill="none" stroke="#1a1a1a" stroke-width="1.1"/><path d="M20.9 8.2Q22.1 8.4 22.1 10.1Q22.1 11.8 20.9 12Z" fill="#1a1a1a"/><path d="M4.1 7.1H10.2L11.2 9.6L12.6 7.1H16.2V13.1H4.1Z" fill="#107c10"/><path d="M13.4 1.4L9.7 7.7H11.8L10.9 11.2L14.4 5.3H12.3L13.4 1.4Z" fill="#1a1a1a"/></svg>
<div class="t" style="left:1318.50px;top:730.10px;font-size:12px;color:#1a1a1a;letter-spacing:-0.325px;">18:44</div>
<div class="t" style="left:1285.70px;top:745.70px;font-size:12px;color:#1a1a1a;letter-spacing:-0.018px;">19-02-2026</div>
</body></html>
